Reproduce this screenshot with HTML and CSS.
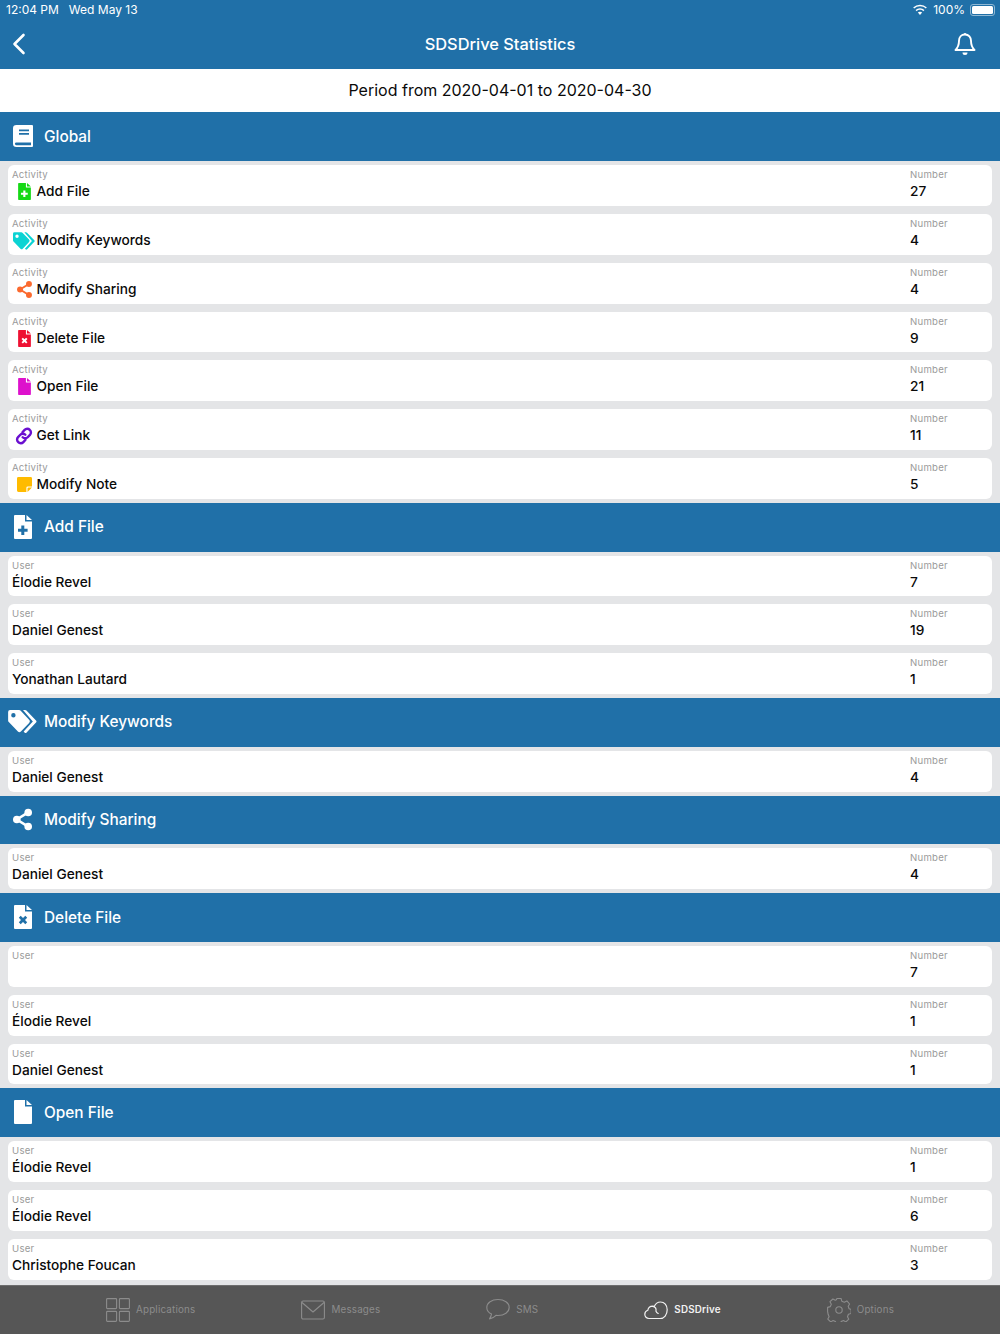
FILE: index.html
```html
<!DOCTYPE html>
<html lang="en">
<head>
<meta charset="utf-8">
<title>SDSDrive Statistics</title>
<link rel="stylesheet" href="styles.css">
</head>
<body>
<svg class="defs" aria-hidden="true">
  <symbol id="i-file" viewBox="0 0 18 24"><path fill="currentColor" d="M1 0h10v6.5h7V23a1 1 0 0 1-1 1H1a1 1 0 0 1-1-1V1a1 1 0 0 1 1-1zM12.5 0 18 5h-5.500z"/></symbol>
  <symbol id="i-file-plus" viewBox="0 0 18 24"><path fill="currentColor" fill-rule="evenodd" d="M1 0h10v6.500h7V23a1 1 0 0 1-1 1H1a1 1 0 0 1-1-1V1a1 1 0 0 1 1-1zm6.300 10.500v3.200H4v3h3.300v3.200h3v-3.200h3.300v-3h-3.300v-3.200zM12.500 0 18 5h-5.500z"/></symbol>
  <symbol id="i-file-x" viewBox="0 0 18 24"><path fill="currentColor" fill-rule="evenodd" d="M1 0h10v6.500h7V23a1 1 0 0 1-1 1H1a1 1 0 0 1-1-1V1a1 1 0 0 1 1-1zm5.700 10.800L4.800 12.700l2.200 2.300-2.200 2.300 1.900 1.900L9 17l2.300 2.200 1.900-1.900-2.200-2.300 2.200-2.300-1.900-1.900L9 13zM12.500 0 18 5h-5.500z"/></symbol>
  <symbol id="i-tags" viewBox="0 0 30 24"><path fill="currentColor" fill-rule="evenodd" d="M2 0h9.500a2 2 0 0 1 1.400.6l9 9.500a2.500 2.500 0 0 1 0 3.400l-8.600 9a2.200 2.200 0 0 1-3.100 0L.7 12.600A2.500 2.500 0 0 1 0 10.900V2a2 2 0 0 1 2-2zm3.500 3.200a2.300 2.300 0 1 0 0 4.600 2.300 2.300 0 0 0 0-4.600z"/><path fill="currentColor" d="M15.500 0h2.200a2 2 0 0 1 1.400.6l10 10.300a1.600 1.600 0 0 1 0 2.200l-9.800 10.300a1.500 1.500 0 0 1-2.200 0l-.9-1 9.600-10.300z"/></symbol>
  <symbol id="i-share" viewBox="0 0 21 24"><g fill="currentColor"><circle cx="16.800" cy="4.200" r="4.200"/><circle cx="4.200" cy="12" r="4.200"/><circle cx="16.800" cy="19.800" r="4.200"/></g><path stroke="currentColor" stroke-width="2.800" fill="none" d="M16.800 4.200 4.200 12l12.600 7.800"/></symbol>
  <symbol id="i-link" viewBox="0 0 20 20"><g fill="none" stroke="currentColor" stroke-width="2.700" stroke-linecap="round"><path d="M8.300 5.800l2.400-2.600a3.900 3.900 0 0 1 5.700 0 3.900 3.900 0 0 1 .2 5.600l-2.500 2.600a3.900 3.900 0 0 1-5.600 0"/><path d="M11.700 14.200l-2.400 2.600a3.900 3.900 0 0 1-5.700 0 3.900 3.900 0 0 1-.2-5.600l2.500-2.600a3.900 3.900 0 0 1 5.600 0"/></g></symbol>
  <symbol id="i-note" viewBox="0 0 16 16"><path fill="currentColor" d="M1.500 0h13A1.500 1.500 0 0 1 16 1.500V10h-4.500A1.500 1.500 0 0 0 10 11.500V16H1.500A1.500 1.500 0 0 1 0 14.500v-13A1.500 1.500 0 0 1 1.500 0zM16 11.200 11.200 16v-3.700a1.100 1.100 0 0 1 1.100-1.100z"/></symbol>
  <symbol id="i-book" viewBox="0 0 20 24" preserveAspectRatio="none"><path fill="currentColor" fill-rule="evenodd" d="M3.500 0H19a1 1 0 0 1 1 1v22a1 1 0 0 1-1 1H3.500A3.500 3.500 0 0 1 0 20.500v-17A3.500 3.500 0 0 1 3.500 0zM6 5v1.800h10V5zm0 3.800v1.800h10V8.800zM3.400 19a1.500 1.500 0 0 0 0 3H18v-3z"/></symbol>
</svg>

<header class="topbar">
  <div class="status">
    <span class="status-time">12:04 PM</span>
    <span class="status-date">Wed May 13</span>
    <span class="status-right">
      <svg class="wifi" viewBox="0 0 18 13"><path fill="#fff" d="M9 2.300c2.500 0 4.800 1 6.500 2.600l1.200-1.300A11.200 11.200 0 0 0 9 .5 11.200 11.200 0 0 0 1.300 3.600l1.200 1.300A9.400 9.400 0 0 1 9 2.300zm0 4c1.400 0 2.700.5 3.700 1.500l1.300-1.300A7.200 7.200 0 0 0 9 4.500a7.200 7.200 0 0 0-5 2l1.300 1.300c1-1 2.300-1.500 3.700-1.500zm0 2.200c-1 0-1.700.3-2.400.9L9 12l2.400-2.600c-.7-.6-1.400-.9-2.400-.9z"/></svg>
      <span>100%</span>
      <span class="battery"><span class="battery-fill"></span></span>
    </span>
  </div>
  <div class="navbar">
    <svg class="back" viewBox="0 0 14 22"><path d="M11.500 2 2.500 11l9 9" fill="none" stroke="#fff" stroke-width="2.600" stroke-linecap="round" stroke-linejoin="round"/></svg>
    <h1 class="nav-title">SDSDrive Statistics</h1>
    <svg class="bell" viewBox="0 0 22 24"><path d="M11 2.500c-3.800 0-6 2.800-6 6.300 0 4.200-.7 6.400-3.500 9.200h19c-2.800-2.800-3.500-5-3.500-9.200 0-3.500-2.200-6.300-6-6.300z" fill="none" stroke="#fff" stroke-width="1.900" stroke-linejoin="round"/><path d="M9.500 2.500a1.500 1.500 0 0 1 3 0zM8.500 20.500h5a2.500 2.500 0 0 1-5 0z" fill="#fff"/></svg>
  </div>
</header>

<div class="period">Period from 2020-04-01 to 2020-04-30</div>

<main class="content">
  <section>
    <h2 class="sec"><span class="sec-icon"><svg class="si si-book"><use href="#i-book"/></svg></span>Global</h2>
    <div class="row-wrap"><div class="row"><div class="col"><span class="lbl">Activity</span><span class="val"><span class="ri"><svg class="i-file c-green"><use href="#i-file-plus"/></svg></span>Add File</span></div><div class="col"><span class="lbl">Number</span><span class="val">27</span></div></div></div>
    <div class="row-wrap"><div class="row"><div class="col"><span class="lbl">Activity</span><span class="val"><span class="ri"><svg class="i-tags c-cyan"><use href="#i-tags"/></svg></span>Modify Keywords</span></div><div class="col"><span class="lbl">Number</span><span class="val">4</span></div></div></div>
    <div class="row-wrap"><div class="row"><div class="col"><span class="lbl">Activity</span><span class="val"><span class="ri"><svg class="i-share c-orange"><use href="#i-share"/></svg></span>Modify Sharing</span></div><div class="col"><span class="lbl">Number</span><span class="val">4</span></div></div></div>
    <div class="row-wrap"><div class="row"><div class="col"><span class="lbl">Activity</span><span class="val"><span class="ri"><svg class="i-file c-red"><use href="#i-file-x"/></svg></span>Delete File</span></div><div class="col"><span class="lbl">Number</span><span class="val">9</span></div></div></div>
    <div class="row-wrap"><div class="row"><div class="col"><span class="lbl">Activity</span><span class="val"><span class="ri"><svg class="i-file c-magenta"><use href="#i-file"/></svg></span>Open File</span></div><div class="col"><span class="lbl">Number</span><span class="val">21</span></div></div></div>
    <div class="row-wrap"><div class="row"><div class="col"><span class="lbl">Activity</span><span class="val"><span class="ri"><svg class="i-link c-purple"><use href="#i-link"/></svg></span>Get Link</span></div><div class="col"><span class="lbl">Number</span><span class="val">11</span></div></div></div>
    <div class="row-wrap"><div class="row"><div class="col"><span class="lbl">Activity</span><span class="val"><span class="ri"><svg class="i-note c-yellow"><use href="#i-note"/></svg></span>Modify Note</span></div><div class="col"><span class="lbl">Number</span><span class="val">5</span></div></div></div>
  </section>
  <section>
    <h2 class="sec"><span class="sec-icon"><svg class="si si-file"><use href="#i-file-plus"/></svg></span>Add File</h2>
    <div class="row-wrap"><div class="row"><div class="col"><span class="lbl">User</span><span class="val">Élodie Revel</span></div><div class="col"><span class="lbl">Number</span><span class="val">7</span></div></div></div>
    <div class="row-wrap"><div class="row"><div class="col"><span class="lbl">User</span><span class="val">Daniel Genest</span></div><div class="col"><span class="lbl">Number</span><span class="val">19</span></div></div></div>
    <div class="row-wrap"><div class="row"><div class="col"><span class="lbl">User</span><span class="val">Yonathan Lautard</span></div><div class="col"><span class="lbl">Number</span><span class="val">1</span></div></div></div>
  </section>
  <section>
    <h2 class="sec"><span class="sec-icon"><svg class="si si-tags"><use href="#i-tags"/></svg></span>Modify Keywords</h2>
    <div class="row-wrap"><div class="row"><div class="col"><span class="lbl">User</span><span class="val">Daniel Genest</span></div><div class="col"><span class="lbl">Number</span><span class="val">4</span></div></div></div>
  </section>
  <section>
    <h2 class="sec"><span class="sec-icon"><svg class="si si-share"><use href="#i-share"/></svg></span>Modify Sharing</h2>
    <div class="row-wrap"><div class="row"><div class="col"><span class="lbl">User</span><span class="val">Daniel Genest</span></div><div class="col"><span class="lbl">Number</span><span class="val">4</span></div></div></div>
  </section>
  <section>
    <h2 class="sec"><span class="sec-icon"><svg class="si si-file"><use href="#i-file-x"/></svg></span>Delete File</h2>
    <div class="row-wrap"><div class="row"><div class="col"><span class="lbl">User</span><span class="val">&nbsp;</span></div><div class="col"><span class="lbl">Number</span><span class="val">7</span></div></div></div>
    <div class="row-wrap"><div class="row"><div class="col"><span class="lbl">User</span><span class="val">Élodie Revel</span></div><div class="col"><span class="lbl">Number</span><span class="val">1</span></div></div></div>
    <div class="row-wrap"><div class="row"><div class="col"><span class="lbl">User</span><span class="val">Daniel Genest</span></div><div class="col"><span class="lbl">Number</span><span class="val">1</span></div></div></div>
  </section>
  <section>
    <h2 class="sec"><span class="sec-icon"><svg class="si si-file"><use href="#i-file"/></svg></span>Open File</h2>
    <div class="row-wrap"><div class="row"><div class="col"><span class="lbl">User</span><span class="val">Élodie Revel</span></div><div class="col"><span class="lbl">Number</span><span class="val">1</span></div></div></div>
    <div class="row-wrap"><div class="row"><div class="col"><span class="lbl">User</span><span class="val">Élodie Revel</span></div><div class="col"><span class="lbl">Number</span><span class="val">6</span></div></div></div>
    <div class="row-wrap"><div class="row"><div class="col"><span class="lbl">User</span><span class="val">Christophe Foucan</span></div><div class="col"><span class="lbl">Number</span><span class="val">3</span></div></div></div>
  </section>
</main>

<nav class="tabbar">
  <div class="tab">
    <svg class="tab-ico" viewBox="0 0 24 24"><g fill="none" stroke="currentColor" stroke-width="1.100"><rect x=".6" y=".6" width="10" height="10" rx=".8"/><rect x="13.400" y=".6" width="10" height="10" rx=".8"/><rect x=".6" y="13.400" width="10" height="10" rx=".8"/><rect x="13.400" y="13.400" width="10" height="10" rx=".8"/></g></svg>
    <span>Applications</span>
  </div>
  <div class="tab">
    <svg class="tab-ico" viewBox="0 0 24 24"><g fill="none" stroke="currentColor" stroke-width="1.100" stroke-linejoin="round"><rect x=".6" y="3" width="22.800" height="18" rx="1.500"/><path d="M1 4.500 12 14 23 4.500"/></g></svg>
    <span>Messages</span>
  </div>
  <div class="tab">
    <svg class="tab-ico" viewBox="0 0 24 24"><path d="M12 1.500C5.700 1.500.8 4.900.8 9.500c0 2.800 1.800 5.200 4.700 6.600-.3 1.600-1 3.300-2 4.800 2.700-.6 5-1.800 6.500-3.500.7.100 1.300.1 2 .1 6.300 0 11.200-3.400 11.200-8S18.300 1.500 12 1.500z" fill="none" stroke="currentColor" stroke-width="1.100" stroke-linejoin="round"/></svg>
    <span>SMS</span>
  </div>
  <div class="tab is-active">
    <svg class="tab-ico" viewBox="0 0 24 24"><path d="M5 20.500c-2.500 0-4.200-1.900-4.200-4.200 0-1.900 1.200-3.400 3-4 .4-2.500 2.500-4.200 4.800-4.200.7 0 1.200.1 1.700.3C11.500 5.600 13.700 4 16.500 4c3.900 0 6.700 3.300 6.700 7.800 0 5-3 8.700-7.200 8.700zM8.800 8.300c2.400.5 3.600 2.300 3.200 4.700M12 13.200c.4 1 1.100 1.800 2.200 2.300" fill="none" stroke="currentColor" stroke-width="1.200" stroke-linecap="round" stroke-linejoin="round"/></svg>
    <span>SDSDrive</span>
  </div>
  <div class="tab">
    <svg class="tab-ico" viewBox="0 0 24 24"><g fill="none" stroke="currentColor" stroke-width="1.100" stroke-linejoin="round"><path d="M10 1h4l.8 2.800 2.500 1 2.600-1.300 2.700 3.100-1.400 2.300.9 2.400 2 .7v4l-2.700.9-.9 2.400 1.300 2.500-2.900 2.700-2.400-1.300-2.400 1-.9 2.500-.2.300h-3.600l-.9-2.800-2.400-1-2.400 1.300-2.900-2.800 1.300-2.400-1-2.400L.6 14v-4l2.700-.8 1-2.400L3 4.300l2.900-2.700 2.400 1.200 1-.4z" transform="translate(0 -.6)"/><circle cx="12" cy="12" r="3.200"/></g></svg>
    <span>Options</span>
  </div>
</nav>
</body>
</html>
```
FILE: styles.css
```css
* { box-sizing: border-box; }
html, body { margin: 0; padding: 0; }
body {
  width: 1000px;
  height: 1334px;
  overflow: hidden;
  background: #e4e5e7;
  color: #0a0a0a;
  font-family: Inter, "Liberation Sans", sans-serif;
  display: flex;
  flex-direction: column;
}
.defs { width: 0; height: 0; position: absolute; }

.topbar { background: #2070a8; color: #fff; height: 69px; flex: none; }
.status { height: 20px; display: flex; align-items: center; padding: 0 5px 0 6px; font-size: 12px; gap: 10px; line-height: 20px; }
.status-right { margin-left: auto; display: flex; align-items: center; gap: 5px; }
.wifi { width: 16px; height: 12px; }
.battery { width: 25px; height: 12px; border: 1px solid #8fb8d4; border-radius: 3px; padding: 1px; display: block; }
.battery-fill { display: block; height: 100%; background: #fff; border-radius: 1.500px; }
.navbar { height: 49px; display: grid; grid-template-columns: 1fr auto 1fr; align-items: center; padding: 0 12px 2px; }
.back { width: 14px; height: 22px; }
.bell { width: 22px; height: 24px; justify-self: end; margin-right: 12px; }
.nav-title { margin: 0; font-size: 16.400px; font-weight: 500; text-align: center; }

.period { height: 43.450px; flex: none; background: #fff; display: flex; align-items: center; justify-content: center; font-size: 16px; padding-bottom: 1px; }

.content { flex: 1; min-height: 0; }
.sec {
  margin: 0;
  height: 48.810px;
  padding-bottom: 1px;
  background: #2070a8;
  color: #fff;
  display: flex;
  align-items: center;
  font-size: 15.400px;
  font-weight: 500;
}
.sec-icon { width: 44px; height: 24px; flex: none; display: flex; align-items: center; justify-content: center; }
.si { color: #fff; display: block; }
.si-book { width: 20px; height: 22px; margin-left: 2px; }
.si-file { width: 18px; height: 24px; margin-left: 1px; }
.si-tags { width: 29px; height: 23px; }
.si-share { width: 19px; height: 23px; }

.row-wrap { height: 48.810px; padding: 4px 8px; }
.row {
  height: 100%;
  background: #fff;
  border-radius: 6px;
  display: grid;
  grid-template-columns: 1fr 82px;
  padding: 4px 0 0 4px;
}
.col { display: flex; flex-direction: column; min-width: 0; }
.lbl { font-size: 9.600px; line-height: 11px; color: #9a9a9a; letter-spacing: .25px; }
.val { font-size: 13.700px; line-height: 17px; margin-top: 3px; font-weight: 500; display: flex; align-items: center; white-space: pre; }
.ri { width: 24.500px; height: 17px; display: flex; align-items: center; justify-content: center; flex: none; }
.i-file { width: 13px; height: 17px; }
.i-tags { width: 22px; height: 18px; }
.i-share { width: 15px; height: 17px; }
.i-link { width: 18px; height: 18px; }
.i-note { width: 15px; height: 15px; }
.c-green { color: #16d916; }
.c-cyan { color: #0bd3d3; }
.c-orange { color: #fb6a2f; }
.c-red { color: #ee1133; }
.c-magenta { color: #dd11cc; }
.c-purple { color: #6a0fd0; }
.c-yellow { color: #ffbb00; }

.tabbar {
  height: 49.500px;
  flex: none;
  background: #565656;
  border-top: 1px solid #6e6e6e;
  display: flex;
  justify-content: space-evenly;
  color: #8c8c8c;
  font-size: 9.800px;
  letter-spacing: .2px;
}
.tab { display: flex; align-items: center; gap: 6px; }
.tab-ico { width: 24px; height: 24px; flex: none; }
.is-active { color: #f2f2f2; font-weight: 600; }
```
